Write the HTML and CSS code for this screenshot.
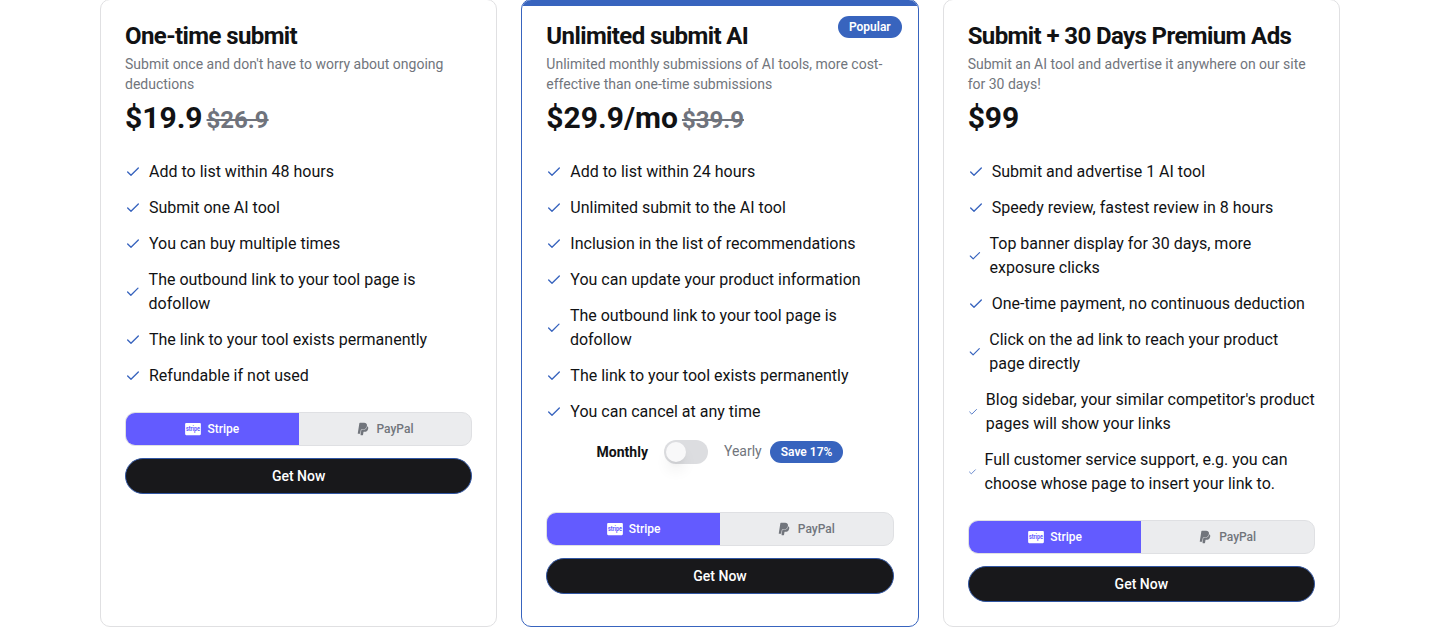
FILE: index.html
```html
<!DOCTYPE html>
<html lang="en">
<head>
<meta charset="utf-8">
<title>Pricing</title>
<link rel="stylesheet" href="styles.css">
</head>
<body>
<svg class="sprite" aria-hidden="true">
  <symbol id="check" viewBox="0 0 24 24"><path d="M20 6 9 17l-5-5" fill="none" stroke="currentColor" stroke-width="2" stroke-linecap="round" stroke-linejoin="round"/></symbol>
  <symbol id="paypal" viewBox="0 0 384 512"><path fill="currentColor" d="M111.4 295.9c-3.5 19.2-17.4 108.7-21.5 134-.3 1.8-1 2.5-3 2.5H12.3c-7.6 0-13.1-6.6-12.1-13.9L58.8 46.6c1.5-9.6 10.1-16.9 20-16.9 152.3 0 165.1-3.7 204 11.4 60.1 23.3 65.6 79.5 44 140.3-21.5 62.6-72.5 89.5-140.1 90.3-43.4.7-69.5-7-75.3 24.2zM357.1 152c-1.8-1.3-2.5-1.8-3 1.3-2 11.4-5.1 22.5-8.8 33.6-39.9 113.8-150.5 103.9-204.5 103.9-6.1 0-10.1 3.3-10.9 9.4-22.6 140.4-27.1 169.7-27.1 169.7-1 7.1 3.5 12.9 10.6 12.9h63.5c8.6 0 15.7-6.3 17.4-14.9.7-5.4-1.1 6.1 14.4-91.3 4.6-22 14.3-19.7 29.3-19.7 71 0 126.4-28.8 142.9-112.3 6.5-34.8 4.6-71.4-23.8-92.6z"/></symbol>
</svg>
<main class="plans">
  <section class="card">
    <header class="head">
      <h3 class="title">One-time submit</h3>
      <p class="desc">Submit once and don't have to worry about ongoing deductions</p>
      <div class="price">$19.9<span class="old">$26.9</span></div>
    </header>
    <ul class="features">
      <li><svg class="tick"><use href="#check"/></svg><span>Add to list within 48 hours</span></li>
      <li><svg class="tick"><use href="#check"/></svg><span>Submit one AI tool</span></li>
      <li><svg class="tick"><use href="#check"/></svg><span>You can buy multiple times</span></li>
      <li><svg class="tick"><use href="#check"/></svg><span>The outbound link to your tool page is dofollow</span></li>
      <li><svg class="tick"><use href="#check"/></svg><span>The link to your tool exists permanently</span></li>
      <li><svg class="tick"><use href="#check"/></svg><span>Refundable if not used</span></li>
    </ul>
    <div class="pay">
      <button class="option active"><svg class="stripe" viewBox="0 0 576 512"><rect y="32" width="576" height="448" rx="40"/><text x="288" y="316" text-anchor="middle" textLength="510" lengthAdjust="spacingAndGlyphs">stripe</text></svg>Stripe</button>
      <button class="option"><svg class="paypal"><use href="#paypal"/></svg>PayPal</button>
    </div>
    <button class="buy">Get Now</button>
  </section>

  <section class="card featured">
    <div class="bar"></div>
    <span class="badge popular">Popular</span>
    <header class="head">
      <h3 class="title">Unlimited submit AI</h3>
      <p class="desc">Unlimited monthly submissions of AI tools, more cost-effective than one-time submissions</p>
      <div class="price">$29.9/mo<span class="old">$39.9</span></div>
    </header>
    <ul class="features">
      <li><svg class="tick"><use href="#check"/></svg><span>Add to list within 24 hours</span></li>
      <li><svg class="tick"><use href="#check"/></svg><span>Unlimited submit to the AI tool</span></li>
      <li><svg class="tick"><use href="#check"/></svg><span>Inclusion in the list of recommendations</span></li>
      <li><svg class="tick"><use href="#check"/></svg><span>You can update your product information</span></li>
      <li><svg class="tick"><use href="#check"/></svg><span>The outbound link to your tool page is dofollow</span></li>
      <li><svg class="tick"><use href="#check"/></svg><span>The link to your tool exists permanently</span></li>
      <li><svg class="tick"><use href="#check"/></svg><span>You can cancel at any time</span></li>
    </ul>
    <div class="billing">
      <span class="monthly">Monthly</span>
      <button class="switch" aria-label="Yearly billing"><span class="thumb"></span></button>
      <span class="yearly">Yearly</span>
      <span class="badge">Save 17%</span>
    </div>
    <div class="pay">
      <button class="option active"><svg class="stripe" viewBox="0 0 576 512"><rect y="32" width="576" height="448" rx="40"/><text x="288" y="316" text-anchor="middle" textLength="510" lengthAdjust="spacingAndGlyphs">stripe</text></svg>Stripe</button>
      <button class="option"><svg class="paypal"><use href="#paypal"/></svg>PayPal</button>
    </div>
    <button class="buy">Get Now</button>
  </section>

  <section class="card">
    <header class="head">
      <h3 class="title">Submit + 30 Days Premium Ads</h3>
      <p class="desc">Submit an AI tool and advertise it anywhere on our site for 30 days!</p>
      <div class="price">$99</div>
    </header>
    <ul class="features">
      <li><svg class="tick"><use href="#check"/></svg><span>Submit and advertise 1 AI tool</span></li>
      <li><svg class="tick"><use href="#check"/></svg><span>Speedy review, fastest review in 8 hours</span></li>
      <li><svg class="tick"><use href="#check"/></svg><span>Top banner display for 30 days, more exposure clicks</span></li>
      <li><svg class="tick"><use href="#check"/></svg><span>One-time payment, no continuous deduction</span></li>
      <li><svg class="tick"><use href="#check"/></svg><span>Click on the ad link to reach your product page directly</span></li>
      <li><svg class="tick"><use href="#check"/></svg><span>Blog sidebar, your similar competitor's product pages will show your links</span></li>
      <li><svg class="tick"><use href="#check"/></svg><span>Full customer service support, e.g. you can choose whose page to insert your link to.</span></li>
    </ul>
    <div class="pay">
      <button class="option active"><svg class="stripe" viewBox="0 0 576 512"><rect y="32" width="576" height="448" rx="40"/><text x="288" y="316" text-anchor="middle" textLength="510" lengthAdjust="spacingAndGlyphs">stripe</text></svg>Stripe</button>
      <button class="option"><svg class="paypal"><use href="#paypal"/></svg>PayPal</button>
    </div>
    <button class="buy">Get Now</button>
  </section>
</main>
</body>
</html>
```
FILE: styles.css
```css
* { box-sizing: border-box; margin: 0; padding: 0; }
html { overflow: hidden; }
body { background: #fff; color: #111214; font: 16px/24px Roboto, sans-serif; }
button { font-family: inherit; border: 0; }
.sprite { position: absolute; width: 0; height: 0; }
.plans {
  display: grid;
  grid-template-columns: repeat(3, 1fr);
  gap: 24px;
  width: 1240px;
  margin: -1px auto 0;
}
.card {
  position: relative;
  display: flex;
  flex-direction: column;
  padding: 24px;
  overflow: hidden;
  border: 1px solid #e0e0e2;
  border-radius: 10px;
}
.featured { border-color: #3864be; }
.bar { position: absolute; top: 0; left: 0; right: 0; height: 6px; background: #3864be; }
.head { display: flex; flex-direction: column; gap: 6px; }
.title { font-size: 24px; line-height: 24px; font-weight: 700; letter-spacing: -0.6px; }
.desc { font-size: 14px; line-height: 20px; color: #71757c; }
.price { font-size: 30px; line-height: 36px; font-weight: 700; }
.old { margin-left: 4px; font-size: 24px; line-height: 32px; color: #6f737c; text-decoration: line-through; }
.features { display: flex; flex-direction: column; gap: 12px; margin: 24px 0; list-style: none; }
.features li { display: flex; align-items: center; }
.tick { width: 16px; height: 16px; margin-right: 8px; color: #3864be; }
.badge {
  padding: 3px 11px;
  border-radius: 11px;
  background: #3864be;
  color: #fff;
  font-size: 12px;
  line-height: 16px;
  font-weight: 600;
}
.popular { position: absolute; top: 16px; right: 16px; }
.billing { display: flex; align-items: center; justify-content: center; height: 24px; margin: -8px 0 48px; font-size: 14px; }
.monthly { font-weight: 700; }
.switch { width: 44px; height: 24px; margin: 0 16px; padding: 2px; border-radius: 12px; background: #dcdde0; }
.thumb { display: block; width: 20px; height: 20px; border-radius: 50%; background: #f8f8f9; box-shadow: 0 10px 15px -3px rgb(0 0 0 / .1), 0 4px 6px -4px rgb(0 0 0 / .1); }
.yearly { margin-right: 8px; padding-bottom: 2px; color: #71757c; }
.pay { display: grid; grid-template-columns: 1fr 1fr; height: 34px; overflow: hidden; border: 1px solid #dfe0e3; border-radius: 10px; background: #ebecee; }
.option {
  display: flex;
  align-items: center;
  justify-content: center;
  gap: 6px;
  background: none;
  color: #71757c;
  font-size: 12px;
  line-height: 16px;
  font-weight: 500;
}
.option.active { background: #635bff; color: #fff; }
.stripe { width: 16px; height: 14px; }
.stripe rect { fill: #fff; }
.stripe text { fill: #635bff; font-size: 240px; font-weight: 700; }
.paypal { width: 12px; height: 14px; margin-right: 2px; }
.buy { height: 36px; margin-top: 12px; border: 1px solid #3156a3; border-radius: 18px; background: #18181b; color: #fff; font-size: 14px; line-height: 20px; font-weight: 500; }
```
